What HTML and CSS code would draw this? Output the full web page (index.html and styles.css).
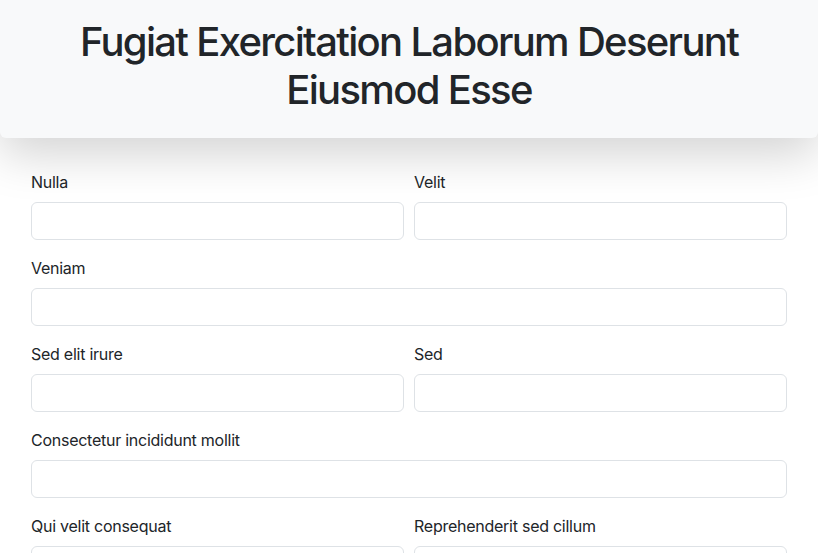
FILE: index.html
```html
<!DOCTYPE html>
<html lang="en">
<head>
<meta charset="utf-8">
<title>Form</title>
<link rel="stylesheet" href="styles.css">
</head>
<body>
<header class="hero">
  <h1 class="hero-title">Fugiat Exercitation Laborum Deserunt Eiusmod Esse</h1>
</header>
<form class="form">
  <div class="field"><label class="label">Nulla</label><input class="input" type="text"></div>
  <div class="field"><label class="label">Velit</label><input class="input" type="text"></div>
  <div class="field wide"><label class="label">Veniam</label><input class="input" type="text"></div>
  <div class="field"><label class="label">Sed elit irure</label><input class="input" type="text"></div>
  <div class="field"><label class="label">Sed</label><input class="input" type="text"></div>
  <div class="field wide"><label class="label">Consectetur incididunt mollit</label><input class="input" type="text"></div>
  <div class="field"><label class="label">Qui velit consequat</label><input class="input" type="text"></div>
  <div class="field"><label class="label">Reprehenderit sed cillum</label><input class="input" type="text"></div>
</form>
</body>
</html>
```

FILE: styles.css
```css
* { box-sizing: border-box; }
html, body { margin: 0; padding: 0; }
body {
  background: #fff;
  color: #212529;
  font-family: Inter, "Noto Sans", "Liberation Sans", sans-serif;
  font-size: 16px;
  line-height: 1.5;
  overflow: hidden;
}
.hero {
  background: #f8f9fa;
  border-radius: 0 0 6px 6px;
  box-shadow: 0 16px 48px rgba(0, 0, 0, 0.175);
  padding: 18px 16px 24px;
  position: relative;
}
.hero-title {
  margin: 0 auto;
  max-width: 700px;
  font-size: 40px;
  font-weight: 500;
  line-height: 1.2;
  letter-spacing: -0.042em;
  text-align: center;
}
.form {
  display: grid;
  grid-template-columns: 1fr 1fr;
  column-gap: 10px;
  row-gap: 16px;
  padding: 32px 31px 0 31px;
}
.field { display: flex; flex-direction: column; }
.field.wide { grid-column: 1 / -1; }
.label {
  display: block;
  margin-bottom: 8px;
  font-size: 16px;
  line-height: 24px;
  letter-spacing: -0.016em;
}
.input {
  display: block;
  width: 100%;
  height: 38px;
  border: 1px solid #dee2e6;
  border-radius: 6px;
  background: #fff;
  font: inherit;
  padding: 6px 12px;
}
```
